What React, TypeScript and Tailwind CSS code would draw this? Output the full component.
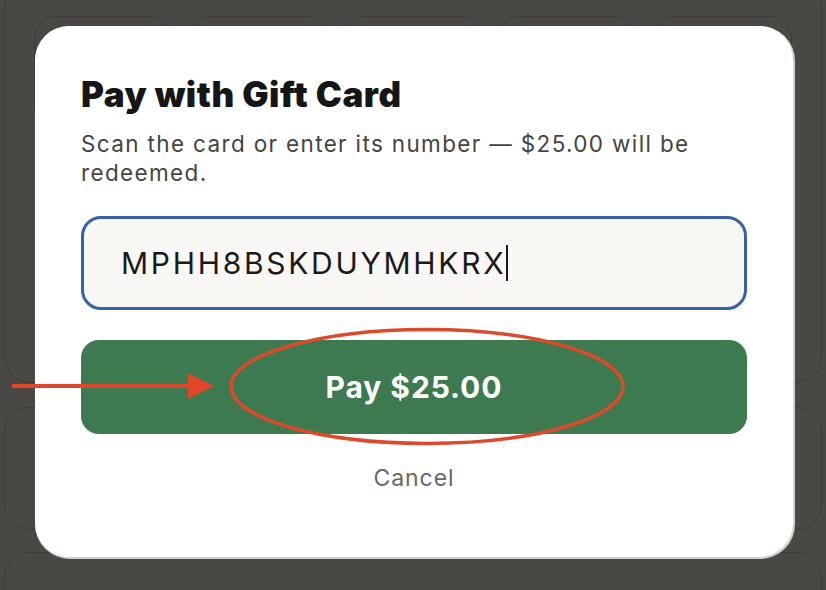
import React from 'react';

const tiles = ['a', 'b', 'c', 'd', 'e'];

const Backdrop = () => (
  <div className="flex flex-col px-[4px]">
    <div className="-mt-[20px] h-[403px] rounded-[26px] border border-[#3d3a38] pt-[35px] px-[29px]">
      <div className="flex gap-[16px]">
        {tiles.map((t) => (
          <div key={t} className="h-[110px] flex-1 rounded-[22px] border border-[#3d3a38]" />
        ))}
      </div>
    </div>
    <div className="mt-[24px] h-[123px] rounded-[26px] border border-[#3d3a38]" />
    <div className="mt-[22px] h-[80px] rounded-[26px] border border-[#3d3a38] pt-[30px] pl-[230px]">
      <span className="text-[26px] font-bold text-[#35302e]">The $25.00 Gift Card</span>
    </div>
  </div>
);

const App = () => {
  return (
    <div
      className="relative h-[590px] w-[826px] overflow-hidden bg-[#4a4845]"
      style={{ fontFamily: 'Inter, "Noto Sans", sans-serif' }}
    >
      <Backdrop />

      {/* modal */}
      <div className="absolute inset-0 flex justify-center pl-[2px] pt-[26px]">
        <div className="h-[531px] w-[758px] rounded-[34px] bg-white px-[46px] pt-[48px] shadow-[1px_1px_0_1px_#d6d2ca]">
          <h1 className="text-[35px] leading-[40px] font-black tracking-[0.015em] text-[#161616]">
            Pay with Gift Card
          </h1>
          <p className="mt-[15px] text-[22.5px] leading-[29px] tracking-[0.06em] text-[#47433f]">
            Scan the card or enter its number — $25.00 will be redeemed.
          </p>
          <div className="mt-[29px] flex h-[94px] items-center rounded-[20px] border-[3px] border-[#3662a8] bg-[#f9f7f4] pl-[37px]">
            <span className="text-[30px] tracking-[0.09em] text-[#1a1a1a]">MPHH8BSKDUYMHKRX</span>
            <span className="h-[36px] w-[2px] bg-[#1a1a1a]" />
          </div>
          <button className="mt-[30px] flex h-[94px] w-full items-center justify-center rounded-[18px] bg-[#3e7a50] text-[30px] font-bold tracking-[0.03em] text-white">
            Pay $25.00
          </button>
          <div className="mt-[29px] text-center text-[23px] leading-[30px] tracking-[0.04em] text-[#6b665f]">Cancel</div>
        </div>
      </div>

      {/* annotation */}
      <svg className="pointer-events-none absolute inset-0" width="826" height="590" viewBox="0 0 826 590">
        <ellipse cx="427" cy="386.5" rx="196" ry="57" fill="none" stroke="#dd4a2b" strokeWidth="3.5" />
        <line x1="12" y1="386" x2="192" y2="386" stroke="#e0472a" strokeWidth="4" />
        <polygon points="188,373 214,386 188,399" fill="#e0472a" />
      </svg>
    </div>
  );
};

export default App;
